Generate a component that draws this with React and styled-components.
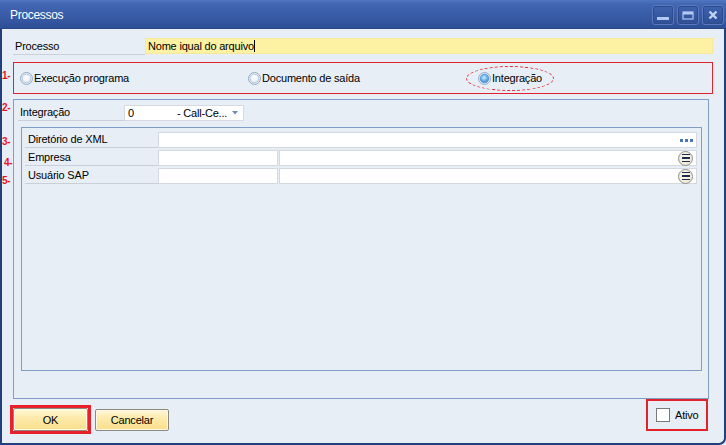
import React from 'react';
import styled, { createGlobalStyle } from 'styled-components';

const Global = createGlobalStyle`
  html, body { margin: 0; padding: 0; background: #e8eef6; }
  body { font-family: "Liberation Sans", Arial, sans-serif; font-size: 11px; color: #000; letter-spacing: -0.2px; }
  * { box-sizing: border-box; }
`;

const Window = styled.div`
  width: 726px;
  height: 445px;
  display: flex;
  flex-direction: column;
  background: #e8eef6;
  overflow: hidden;
`;

const TitleBar = styled.div`
  height: 29px;
  flex: none;
  display: flex;
  align-items: center;
  padding: 0 2px 0 10px;
  background: linear-gradient(#5277c2 0%, #4266b2 15%, #3a5ca8 55%, #2e4e96 100%);
  border-bottom: 1px solid #2a4686;
  color: #fff;
  font-size: 12px;
  letter-spacing: -0.3px;
`;

const Title = styled.span`
  flex: 1;
  padding-top: 1px;
`;

const WinButtons = styled.div`
  display: flex;
  gap: 3px;
  align-self: flex-start;
  margin-top: 5px;
`;

const WinButton = styled.div`
  width: 22px;
  height: 20px;
  border-radius: 3px;
  border: 1px solid #5a79bd;
  box-shadow: inset 0 0 0 1px #2c4a8c;
  background: linear-gradient(#3f62ae, #2f4f96);
  display: flex;
  align-items: center;
  justify-content: center;
`;

const Frame = styled.div`
  flex: 1;
  display: flex;
  flex-direction: column;
  border: 2px solid #223f7e;
  border-top: none;
  border-bottom-right-radius: 7px;
  padding: 9px 11px 0 11px;
`;

const ProcRow = styled.div`
  display: flex;
  height: 17px;
`;

const LabelCell = styled.div`
  width: ${p => p.$w}px;
  flex: none;
  height: ${p => p.$h || 16}px;
  line-height: ${p => (p.$h || 16) - 1}px;
  padding-left: ${p => p.$pl || 2}px;
  border-bottom: 1px solid #c9d0da;
`;

const YellowField = styled.div`
  flex: 1;
  height: 16px;
  background: #fdf1a4;
  border: 1px solid #f6e89a;
  line-height: 14px;
  padding-left: 2px;
`;

const Caret = styled.span`
  display: inline-block;
  width: 1px;
  height: 12px;
  background: #000;
  vertical-align: -2px;
`;

const RadioBox = styled.div`
  position: relative;
  margin-top: 7px;
  height: 32px;
  border: 1px solid #e3232b;
  display: grid;
  grid-template-columns: 228px 218px auto;
  align-items: center;
  padding-left: 6px;
`;

const Radio = styled.label`
  display: inline-flex;
  align-items: center;
  gap: 1px;
  white-space: nowrap;
`;

const Ellipse = styled.div`
  width: 88px;
  height: 25px;
  border: 1px dashed #e3232b;
  border-radius: 50%;
  display: flex;
  align-items: center;
  padding-left: 11px;
`;

const Annot = styled.span`
  position: absolute;
  left: ${p => p.$l}px;
  top: ${p => p.$t}px;
  color: #e8121c;
  font-size: 10px;
  font-weight: bold;
  line-height: 10px;
`;

const Group = styled.div`
  position: relative;
  margin-top: 5px;
  margin-right: 4px;
  height: 300px;
  border: 1px solid #7f9dc6;
  padding: 5px 4px 0 4px;
  display: flex;
  flex-direction: column;
`;

const IntRow = styled.div`
  display: flex;
  height: 16px;
`;

const Dropdown = styled.div`
  width: 120px;
  height: 16px;
  background: #fff;
  border: 1px solid #d6dbe2;
  display: flex;
  align-items: center;
  padding-left: 3px;
  padding-right: 5px;
`;

const DDValue = styled.span`
  width: 49px;
`;

const DDText = styled.span`
  flex: 1;
`;

const GridBox = styled.div`
  margin: 6px 0 0 3px;
  width: 681px;
  height: 244px;
  border: 1px solid #7f9dc6;
  padding: 4px 4px 0 3px;
  display: flex;
  flex-direction: column;
  gap: 2px;
`;

const GridRow = styled.div`
  position: relative;
  display: flex;
  height: 16px;
`;

const Field = styled.div`
  flex: ${p => (p.$w ? 'none' : 1)};
  width: ${p => (p.$w ? `${p.$w}px` : 'auto')};
  margin-left: ${p => p.$ml || 0}px;
  height: 16px;
  background: #fff;
  border: 1px solid #d4d9e0;
  display: flex;
  align-items: center;
  justify-content: flex-end;
  padding-right: ${p => p.$pr || 0}px;
`;

const Dots = styled.div`
  display: flex;
  gap: 2px;
  margin-top: 1px;
  & > i {
    width: 3px;
    height: 3px;
    background: #4a74bc;
  }
`;

const MenuBtn = styled.div`
  width: 15px;
  height: 15px;
  border-radius: 50%;
  background: radial-gradient(circle at 50% 40%, #fbf8ea, #ece6cc);
  border: 1px solid #8e8e8e;
  display: flex;
  flex-direction: column;
  align-items: center;
  justify-content: center;
  gap: 2px;
  & > i {
    width: 8px;
    height: 1.5px;
    background: #1c2a58;
  }
`;

const BottomRow = styled.div`
  display: flex;
  align-items: flex-start;
`;

const ButtonGroup = styled.div`
  display: flex;
  align-items: center;
  gap: 4px;
  margin: 6px 0 0 -3px;
`;

const Highlight = styled.div`
  border: 3px solid #e8202a;
`;

const Button = styled.button`
  width: ${p => p.$w}px;
  height: ${p => p.$h}px;
  font-family: "Liberation Sans", Arial, sans-serif;
  font-size: 11px;
  letter-spacing: -0.2px;
  color: #000;
  border: 1px solid #8a8a80;
  border-radius: 2px;
  background: linear-gradient(#fff7da 0%, #fdeaa8 45%, #fadf8c 100%);
  box-shadow: inset 0 0 0 1px #fff8e2;
  padding: 0;
  display: flex;
  align-items: center;
  justify-content: center;
`;

const AtivoBox = styled.div`
  margin-left: auto;
  margin-right: 5px;
  width: 62px;
  height: 32px;
  border: 2px solid #e3232b;
  display: flex;
  align-items: center;
  padding-left: 8px;
  gap: 5px;
`;

const CheckBox = styled.div`
  width: 14px;
  height: 14px;
  border: 1px solid #7a7a7a;
  background: #fff;
`;

const RadioIcon = ({ selected }) => (
  <svg width="13" height="13" viewBox="0 0 13 13">
    <defs>
      <radialGradient id={selected ? 'rs' : 'ru'} cx="45%" cy="40%" r="60%">
        {selected ? (
          <>
            <stop offset="0%" stopColor="#d8f0ff" />
            <stop offset="45%" stopColor="#7cc0f4" />
            <stop offset="100%" stopColor="#3b86d6" />
          </>
        ) : (
          <>
            <stop offset="0%" stopColor="#ffffff" />
            <stop offset="70%" stopColor="#eef3f9" />
            <stop offset="100%" stopColor="#cfdbe8" />
          </>
        )}
      </radialGradient>
    </defs>
    <circle cx="6.5" cy="6.5" r="6" fill="#e4ecf5" stroke="#94acc9" strokeWidth="1" />
    <circle cx="6.5" cy="6.5" r="4.3" fill={`url(#${selected ? 'rs' : 'ru'})`} stroke={selected ? '#4d8fd6' : '#aec0d6'} strokeWidth="0.8" />
  </svg>
);

const MinIcon = () => (
  <svg width="14" height="14" viewBox="0 0 14 14">
    <rect x="1" y="9" width="12" height="3" fill="#b2caf2" />
  </svg>
);
const MaxIcon = () => (
  <svg width="14" height="14" viewBox="0 0 14 14">
    <rect x="2" y="4" width="10" height="7" fill="none" stroke="#b2caf2" strokeWidth="1.2" />
    <rect x="2" y="4" width="10" height="2.5" fill="#b2caf2" />
  </svg>
);
const CloseIcon = () => (
  <svg width="14" height="14" viewBox="0 0 14 14">
    <path d="M3.5 3.5 L10.5 10.5 M10.5 3.5 L3.5 10.5" stroke="#c0d4f6" strokeWidth="2.4" />
  </svg>
);

const DDArrow = () => (
  <svg width="6" height="4" viewBox="0 0 6 4">
    <path d="M0 0 H6 L3 3.5 Z" fill="#6a8cc2" />
  </svg>
);

export default function App() {
  return (
    <>
      <Global />
      <Window>
        <TitleBar>
          <Title>Processos</Title>
          <WinButtons>
            <WinButton><MinIcon /></WinButton>
            <WinButton><MaxIcon /></WinButton>
            <WinButton><CloseIcon /></WinButton>
          </WinButtons>
        </TitleBar>
        <Frame>
          <ProcRow>
            <LabelCell $w={132} $h={17}>Processo</LabelCell>
            <YellowField>Nome iqual do arquivo<Caret /></YellowField>
          </ProcRow>

          <RadioBox>
            <Annot $l={-12} $t={8}>1-</Annot>
            <Radio><RadioIcon />Execução programa</Radio>
            <Radio><RadioIcon />Documento de saída</Radio>
            <Ellipse>
              <Radio><RadioIcon selected />Integração</Radio>
            </Ellipse>
          </RadioBox>

          <Group>
            <Annot $l={-12} $t={3}>2-</Annot>
            <IntRow>
              <LabelCell $w={106}>Integração</LabelCell>
              <Dropdown>
                <DDValue>0</DDValue>
                <DDText>- Call-Ce...</DDText>
                <DDArrow />
              </Dropdown>
            </IntRow>
            <GridBox>
              <GridRow>
                <Annot $l={-23} $t={5}>3-</Annot>
                <LabelCell $w={133} $pl={3}>Diretório de XML</LabelCell>
                <Field $pr={3}>
                  <Dots><i /><i /><i /></Dots>
                </Field>
              </GridRow>
              <GridRow>
                <Annot $l={-21} $t={8}>4-</Annot>
                <LabelCell $w={133} $pl={3}>Empresa</LabelCell>
                <Field $w={120} />
                <Field $ml={1} $pr={3}>
                  <MenuBtn><i /><i /><i /></MenuBtn>
                </Field>
              </GridRow>
              <GridRow>
                <Annot $l={-23} $t={8}>5-</Annot>
                <LabelCell $w={133} $pl={3}>Usuário SAP</LabelCell>
                <Field $w={120} />
                <Field $ml={1} $pr={3}>
                  <MenuBtn><i /><i /><i /></MenuBtn>
                </Field>
              </GridRow>
            </GridBox>
          </Group>

          <BottomRow>
            <ButtonGroup>
              <Highlight>
                <Button $w={75} $h={23}>OK</Button>
              </Highlight>
              <Button $w={74} $h={22}>Cancelar</Button>
            </ButtonGroup>
            <AtivoBox>
              <CheckBox />
              <span>Ativo</span>
            </AtivoBox>
          </BottomRow>
        </Frame>
      </Window>
    </>
  );
}
